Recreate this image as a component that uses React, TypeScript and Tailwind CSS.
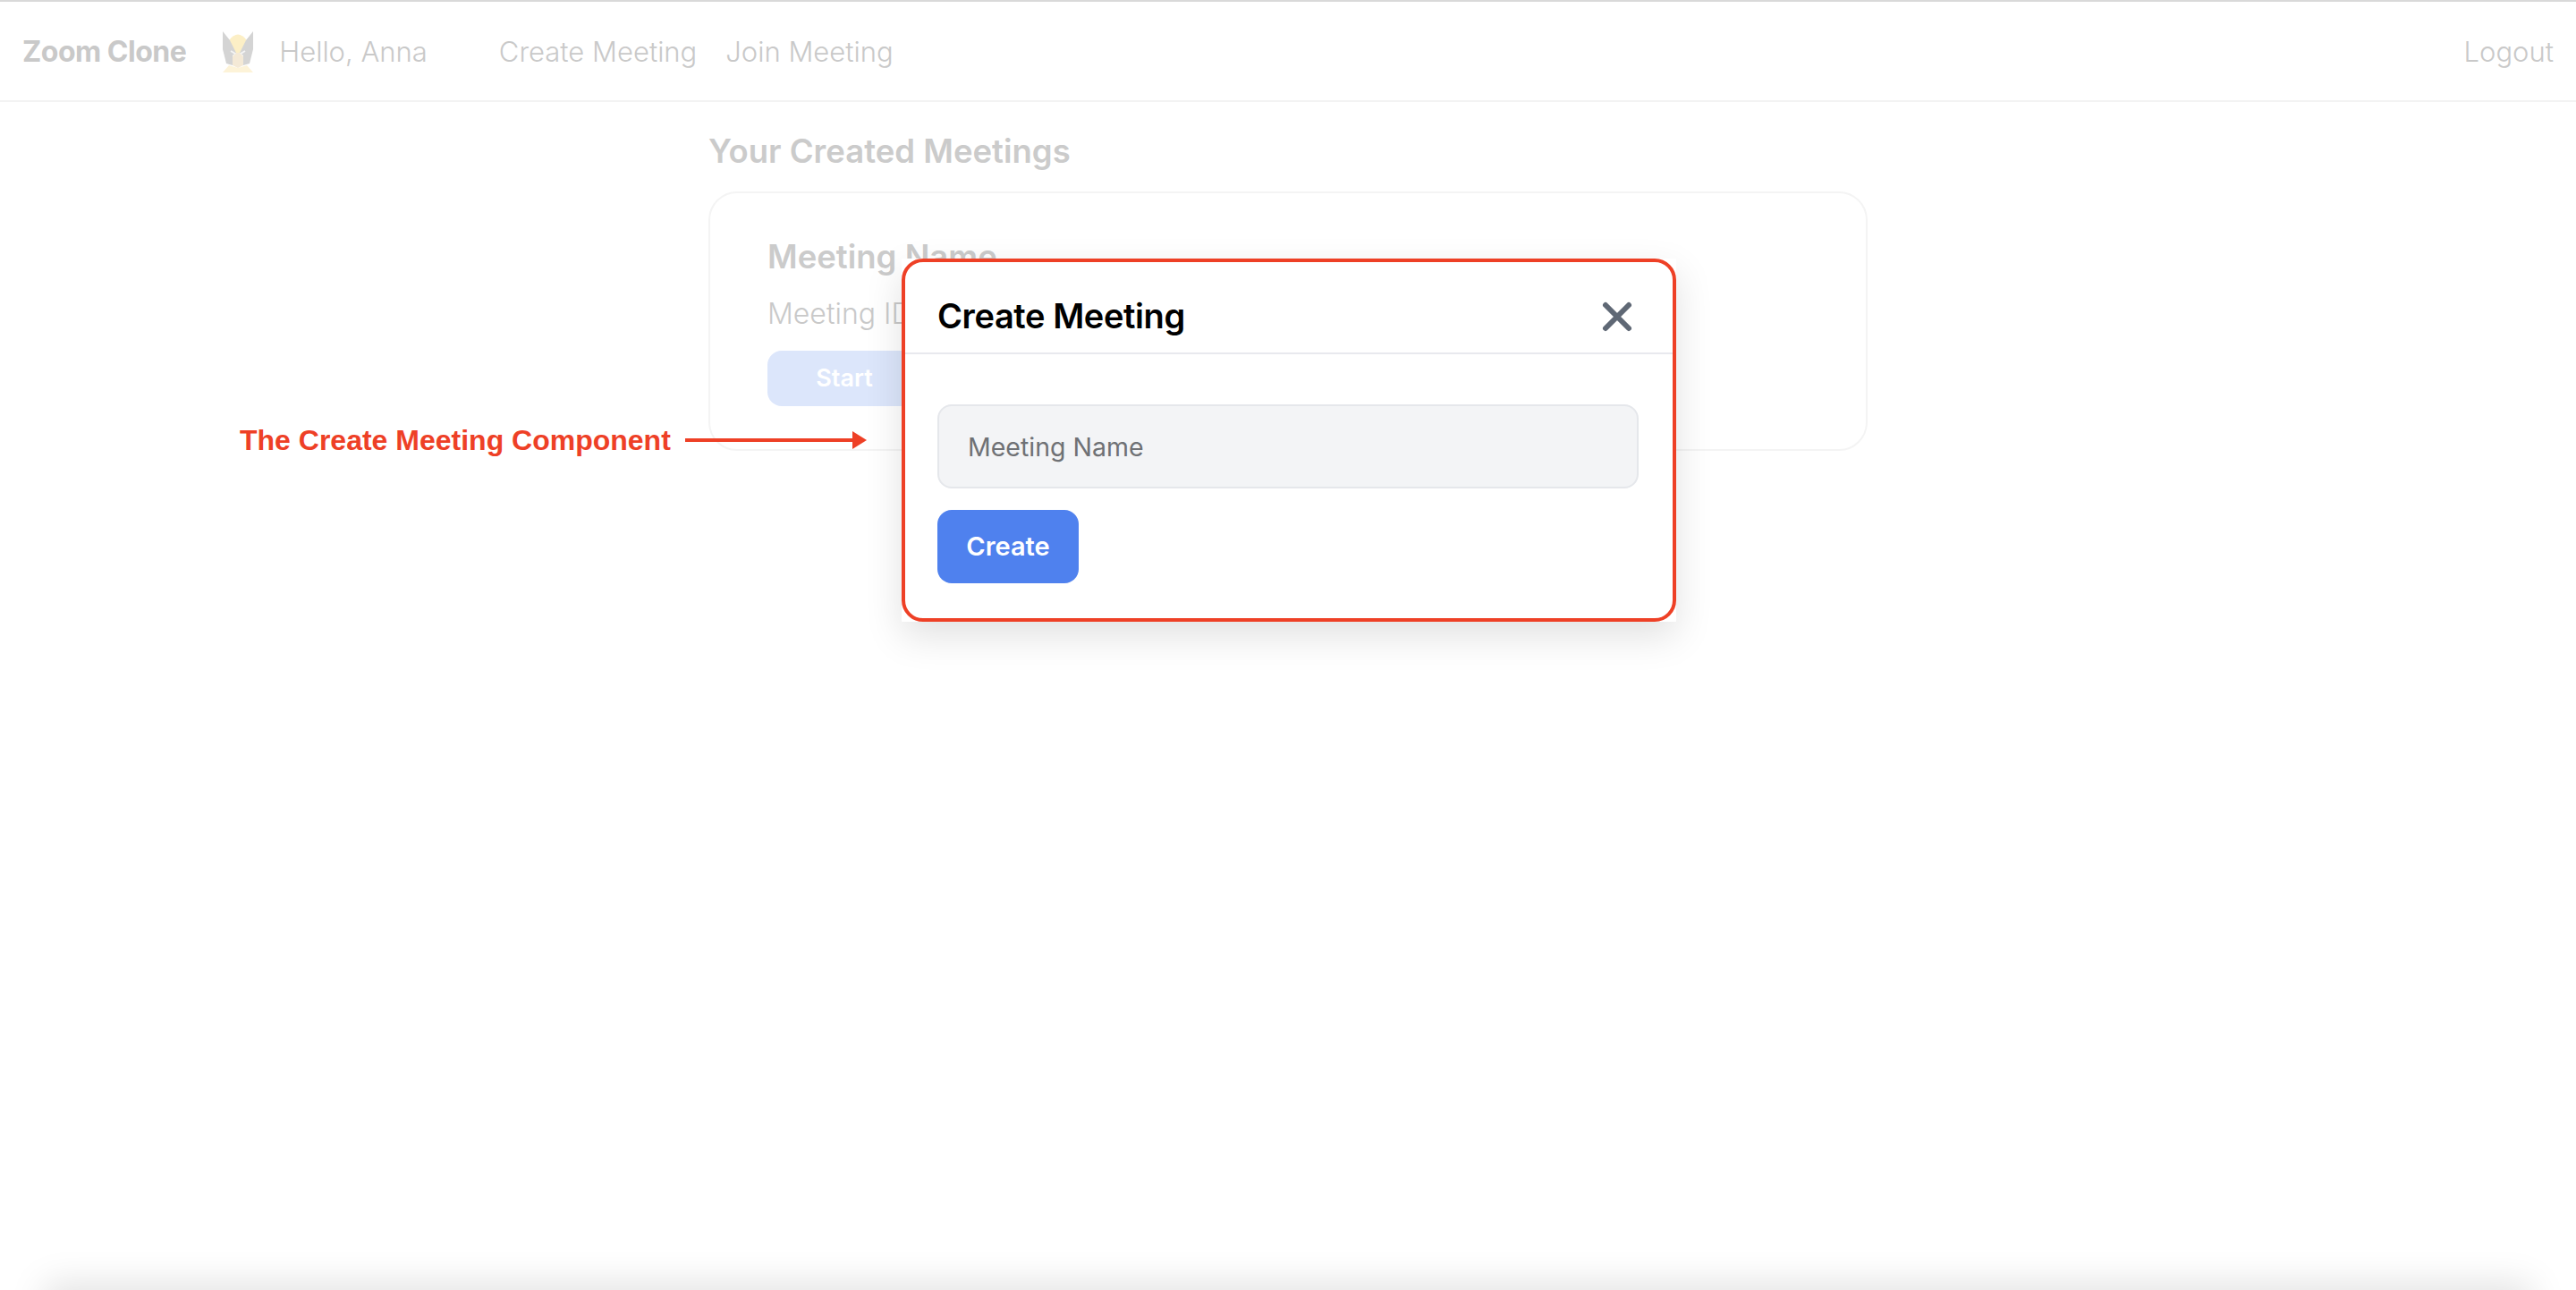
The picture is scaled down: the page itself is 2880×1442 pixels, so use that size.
const sans = "font-['Inter',sans-serif]";

function WolverineLogo() {
  return (
    <svg width="36" height="46" viewBox="0 0 36 46" className="shrink-0">
      <path d="M8 38 L18 41 L28 38 L35 46 H1 Z" fill="#fdf3d8" />
      <path d="M8 10 Q18 -3 28 10 L21 24 H15 Z" fill="#fcefc6" />
      <path d="M1 0 L9 10 L16 24 L12 27 L12 38 L5 36 L1 20 Z" fill="#d4d4d4" />
      <path d="M35 0 L27 10 L20 24 L24 27 L24 38 L31 36 L35 20 Z" fill="#d4d4d4" />
      <path d="M12 28 L16 24 H20 L24 28 V38 L18 41 L12 38 Z" fill="#f4e9d6" />
      <path d="M10 22 L15 25 M26 22 L21 25" stroke="#f4f4f4" strokeWidth="2" />
    </svg>
  );
}

export default function App() {
  return (
    <div className={`relative h-[1442px] w-full overflow-hidden bg-white ${sans}`}>
      <nav className="flex h-[114px] items-center border-t-2 border-b-2 border-t-[#d9d9d9] border-b-[#f3f3f3] pl-[25px] pr-[25px] pt-[2px] text-[31px] text-[#c9c9c9]">
        <span className="text-[32px] font-bold tracking-[-0.5px]">Zoom Clone</span>
        <div className="ml-10 mr-[28px]">
          <WolverineLogo />
        </div>
        <span className="font-light">Hello, Anna</span>
        <a className="ml-20 font-light">Create Meeting</a>
        <a className="ml-8 font-light">Join Meeting</a>
        <a className="ml-auto font-light">Logout</a>
      </nav>

      <main className="mx-auto w-[1296px] pt-[33px]">
        <h2 className="text-[36.5px] leading-[44px] font-semibold text-[#cbcbcb]">Your Created Meetings</h2>
        <div className="mt-[23px] h-[290px] rounded-[32px] border-2 border-[#f4f4f4] px-[64px] pt-[49px]">
          <h3 className="text-[36.5px] leading-[44px] font-semibold text-[#cbcbcb]">Meeting Name</h3>
          <p className="mt-[20px] text-[32px] leading-[44px] font-light text-[#c9c9c9]">Meeting ID: 4829-1173</p>
          <button className="mt-[19px] h-[62px] w-[172px] rounded-[16px] bg-[#dce6fb] text-[27px] font-semibold text-white">
            Start
          </button>
        </div>
      </main>

      <div className="absolute left-[268px] top-[468px] flex items-center">
        <span className="font-['Liberation_Sans',sans-serif] text-[32px] font-bold text-[#ee4026]">The Create Meeting Component</span>
        <div className="ml-4 h-[4px] w-[187px] bg-[#ee4026]" />
        <svg width="16" height="20" viewBox="0 0 16 20" className="shrink-0">
          <path d="M0 0 L16 10 L0 20 Z" fill="#ee4026" />
        </svg>
      </div>

      <div className="absolute left-[1008px] top-[289px] w-[866px] bg-white shadow-[0_16px_40px_rgba(0,0,0,0.12)]">
        <div className="h-[406px] rounded-[24px] border-4 border-[#ee4026]">
          <div className="flex h-[103px] items-center justify-between border-b-2 border-[#e8e9ee] pl-[36px] pr-[44px] pt-[20px]">
            <h3 className="text-[38px] font-semibold tracking-[-0.4px] text-black">Create Meeting</h3>
            <svg width="36" height="36" viewBox="0 0 36 36">
              <path d="M5 5 L31 31 M31 5 L5 31" stroke="#5f6875" strokeWidth="6" strokeLinecap="round" />
            </svg>
          </div>
          <div className="pl-[36px] pr-[38px] pt-[56px]">
            <input
              readOnly
              placeholder="Meeting Name"
              className="h-[94px] w-full rounded-[16px] border-2 border-[#e5e7eb] bg-[#f3f4f6] px-[32px] text-[28.5px] text-[#6f7175] placeholder:text-[#6f7175] outline-none"
            />
            <button className="mt-[24px] h-[82px] w-[158px] rounded-[16px] bg-[#4f81ee] text-[29px] font-semibold text-white">
              Create
            </button>
          </div>
        </div>
      </div>

      <div className="absolute bottom-[-40px] left-[50px] right-[50px] h-[40px] shadow-[0_-6px_40px_rgba(0,0,0,0.13)]" />
    </div>
  );
}
